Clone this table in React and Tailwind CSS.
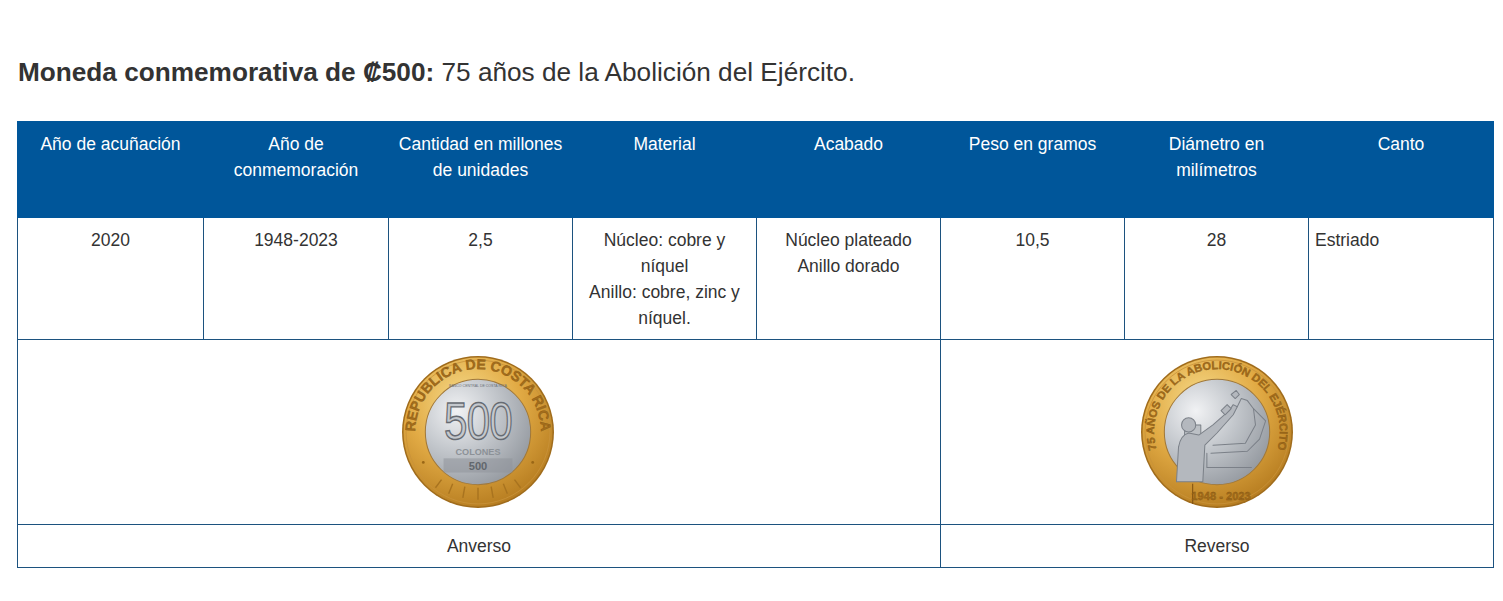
import React from 'react'

const headers = [
  'Año de acuñación',
  'Año de conmemoración',
  'Cantidad en millones de unidades',
  'Material',
  'Acabado',
  'Peso en gramos',
  'Diámetro en milímetros',
  'Canto',
]

const colWidths = [186, 185, 184, 184, 184, 184, 184, 185]

const font = "'Liberation Sans', Arial, sans-serif"

const Coin = ({ id, ringText, ringSize = 12, children }) => (
  <svg width="154" height="156" viewBox="0 0 152 154">
    <defs>
      <radialGradient id={`gold-${id}`} cx="40%" cy="30%" r="75%">
        <stop offset="0%" stopColor="#f6dc8c" />
        <stop offset="50%" stopColor="#e2ab45" />
        <stop offset="100%" stopColor="#b47a1e" />
      </radialGradient>
      <radialGradient id={`silver-${id}`} cx="30%" cy="30%" r="85%">
        <stop offset="0%" stopColor="#f1f2f4" />
        <stop offset="45%" stopColor="#c3c7cc" />
        <stop offset="100%" stopColor="#8e939a" />
      </radialGradient>
      <path id={`arc-${id}`} d="M 32.2 120.8 A 62 62 0 1 1 119.8 120.8" />
    </defs>
    <circle cx="76" cy="77" r="75" fill="#a06c1c" />
    <circle cx="76" cy="77" r="73.5" fill={`url(#gold-${id})`} />
    <circle cx="76" cy="77" r="71" fill="none" stroke="#c8923a" strokeWidth="0.8" />
    <text fontFamily={font} fontWeight="700" fontSize={ringSize} fill="#a36d1b" stroke="#7e5010" strokeWidth="0.3">
      <textPath href={`#arc-${id}`} startOffset="50%" textAnchor="middle">{ringText}</textPath>
    </text>
    <circle cx="76" cy="77" r="52" fill={`url(#silver-${id})`} stroke="#a0783a" strokeWidth="1" />
    {children}
  </svg>
)

export default function App() {
  return (
    <div className="bg-white w-[1503px] h-[601px] pt-[55px] pl-[17px] text-[#333]" style={{ fontFamily: font }}>
      <h2 className="text-[26.2px] leading-[34px] mb-[32px] pl-[1px]">
        <strong className="font-bold">Moneda conmemorativa de ₡500:</strong> 75 años de la Abolición del Ejército.
      </h2>
      <table className="w-[1476px] border-collapse table-fixed text-[17.5px] leading-[26px]">
        <colgroup>
          {colWidths.map((w, i) => (
            <col key={i} style={{ width: w }} />
          ))}
        </colgroup>
        <thead>
          <tr className="bg-[#00569a] h-[96px]">
            {headers.map((h) => (
              <th key={h} className="align-top font-normal text-white px-[8px] pt-[9px] border border-[#00569a]">
                {h}
              </th>
            ))}
          </tr>
        </thead>
        <tbody>
          <tr className="h-[122px]">
            <td className="align-top text-center pt-[9px] border border-[#1c527f]">2020</td>
            <td className="align-top text-center pt-[9px] border border-[#1c527f]">1948-2023</td>
            <td className="align-top text-center pt-[9px] border border-[#1c527f]">2,5</td>
            <td className="align-top text-center pt-[9px] px-[10px] border border-[#1c527f]">
              Núcleo: cobre y níquel
              <br />
              Anillo: cobre, zinc y níquel.
            </td>
            <td className="align-top text-center pt-[9px] border border-[#1c527f]">
              Núcleo plateado
              <br />
              Anillo dorado
            </td>
            <td className="align-top text-center pt-[9px] border border-[#1c527f]">10,5</td>
            <td className="align-top text-center pt-[9px] border border-[#1c527f]">28</td>
            <td className="align-top text-left pt-[9px] pl-[6px] border border-[#1c527f]">Estriado</td>
          </tr>
          <tr className="h-[185px]">
            <td colSpan={5} className="border border-[#1c527f] align-middle">
              <div className="flex justify-center pr-[2px]">
                <Coin id="a" ringText="REPUBLICA DE COSTA RICA" ringSize={14}>
                  <text x="76" y="33" textAnchor="middle" fontSize="3.5" fill="#6b7077" fontFamily={font}>BANCO CENTRAL DE COSTA RICA</text>
                  <g transform="translate(76 84) scale(0.8 1)">
                    <text x="0" y="0" textAnchor="middle" fontSize="52" fill="#c4c8cd" stroke="#666b72" strokeWidth="1.4" fontFamily={font} letterSpacing="-1">500</text>
                  </g>
                  <text x="76" y="100" textAnchor="middle" fontSize="9" fontWeight="700" fill="#8c9197" fontFamily={font}>COLONES</text>
                  <rect x="42" y="103" width="68" height="14" fill="#8f949a" opacity="0.55" />
                  <text x="76" y="115" textAnchor="middle" fontSize="11" fontWeight="700" fill="#62676d" fontFamily={font}>500</text>
                  <circle cx="22" cy="107" r="1.4" fill="#9a6716" />
                  <circle cx="130" cy="107" r="1.4" fill="#9a6716" />
                  <g stroke="#a8731f" strokeWidth="1.4">
                    <line x1="40" y1="124" x2="34" y2="132" />
                    <line x1="51" y1="128" x2="47" y2="138" />
                    <line x1="63" y1="131" x2="61" y2="142" />
                    <line x1="76" y1="132" x2="76" y2="144" />
                    <line x1="89" y1="131" x2="91" y2="142" />
                    <line x1="101" y1="128" x2="105" y2="138" />
                    <line x1="112" y1="124" x2="118" y2="132" />
                  </g>
                </Coin>
              </div>
            </td>
            <td colSpan={3} className="border border-[#1c527f] align-middle">
              <div className="flex justify-center">
                <Coin id="r" ringText="75 AÑOS DE LA ABOLICIÓN DEL EJÉRCITO" ringSize={11}>
                  <g fill="#b4b8be" stroke="#7b8088" strokeWidth="1" strokeLinejoin="round" strokeLinecap="round">
                    <path d="M44 70 L60 70 L60 82 L44 82 Z" fill="#bcc0c5" />
                    <path d="M36 126 L38 92 Q40 80 48 78 L58 80 L72 70 L88 56 L92 50 L96 52 L92 60 L76 78 L64 90 L62 126 Z" />
                    <circle cx="48" cy="70" r="7" />
                    <path d="M80 56 L86 50 L90 54 L84 60 Z" />
                    <path d="M90 40 L95 36 L98 40 L94 44 Z" />
                    <path d="M96 52 L100 44 L106 46 L112 54 L114 70 L104 88 L72 90" fill="none" />
                    <path d="M112 54 L124 66 L118 84 L106 96 L70 98" fill="none" />
                    <path d="M66 98 L66 112 L110 112" fill="none" />
                  </g>
                  <line x1="52" y1="128" x2="52" y2="148" stroke="#7e5010" strokeWidth="1" />
                  <text x="80" y="144" textAnchor="middle" fontSize="11" fontWeight="700" fill="#a36d1b" stroke="#7e5010" strokeWidth="0.3" fontFamily={font}>1948 - 2023</text>
                </Coin>
              </div>
            </td>
          </tr>
          <tr className="h-[43px]">
            <td colSpan={5} className="border border-[#1c527f] text-center align-middle">Anverso</td>
            <td colSpan={3} className="border border-[#1c527f] text-center align-middle">Reverso</td>
          </tr>
        </tbody>
      </table>
    </div>
  )
}
